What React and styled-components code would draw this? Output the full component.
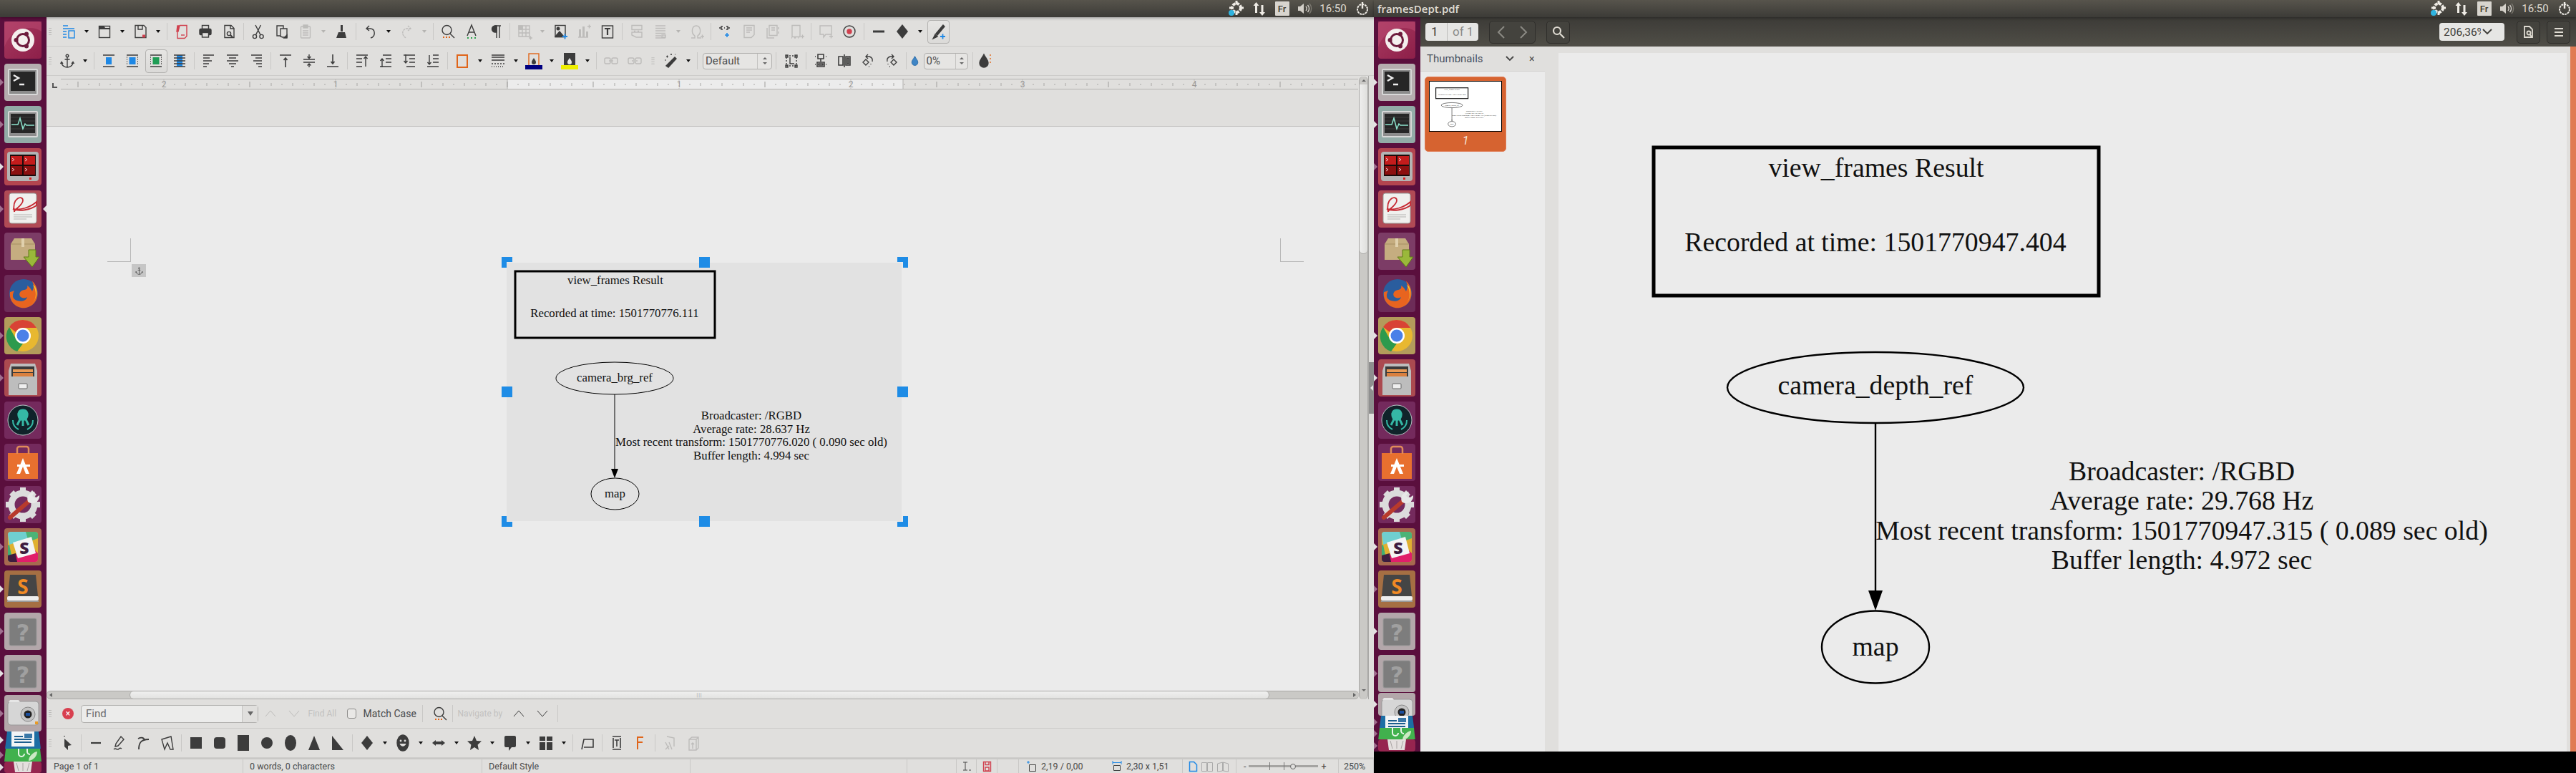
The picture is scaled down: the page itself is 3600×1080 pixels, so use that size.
import React from "react";
import styled, { createGlobalStyle } from "styled-components";

const GlobalStyle = createGlobalStyle`
  html, body {
    margin: 0;
    width: 3600px;
    height: 1080px;
    overflow: hidden;
    background: #000;
    font-family: Roboto, "Noto Sans", sans-serif;
  }
  * { box-sizing: border-box; }
`;

const Desktop = styled.div`
  display: flex;
  width: 3600px;
  height: 1080px;
`;

const Screen = styled.div`
  width: ${(p) => p.$w}px;
  height: 1080px;
  display: flex;
  flex-direction: column;
  background: #000;
`;

const TopBar = styled.div`
  height: 24px;
  flex: none;
  display: flex;
  align-items: center;
  justify-content: space-between;
  padding-left: 5px;
  background: linear-gradient(#57544c, #3c3b37);
  position: relative;
  z-index: 2;
  box-shadow: 0 1px 4px rgba(0, 0, 0, 0.35);
`;

const TitleText = styled.span`
  font-family: "Open Sans", sans-serif;
  font-size: 15px;
  font-weight: 600;
  color: #dfdbd2;
`;

const Indicators = styled.div`
  display: flex;
  align-items: center;
  margin-left: auto;
`;

const Slot = styled.div`
  width: ${(p) => p.$w}px;
  display: flex;
  align-items: center;
  justify-content: center;
  color: #dfdbd2;
  font-size: 15px;
`;

const LangBox = styled.div`
  width: 20px;
  height: 20px;
  border-radius: 1px;
  background: #d8d5cf;
  color: #3c3b37;
  font-size: 13px;
  font-weight: 500;
  display: flex;
  align-items: center;
  justify-content: center;
`;

const Body = styled.div`
  display: flex;
  height: ${(p) => p.$h}px;
  flex: none;
`;

const Launcher = styled.div`
  width: 65px;
  flex: none;
  height: 100%;
  overflow: hidden;
  display: flex;
  flex-direction: column;
  padding: 6px 0 0 6px;
  background: #5a0f3d;
`;

const Tile = styled.div`
  width: 52px;
  height: ${(p) => p.$h || 52}px;
  flex: none;
  margin-bottom: ${(p) => (p.$mb === undefined ? 7 : p.$mb)}px;
  border-radius: 4px;
  background: ${(p) => p.$bg};
  position: relative;
  svg {
    display: block;
    position: relative;
  }
`;

const Pip = styled.span`
  position: absolute;
  left: -6px;
  top: ${(p) => Math.min(p.$h / 2, 26) - 5}px;
  width: 0;
  height: 0;
  border-top: 5px solid transparent;
  border-bottom: 5px solid transparent;
  border-left: 5px solid ${(p) => (p.$open ? "#a0708f" : "#e4e0e2")};
`;

const ActiveArrow = styled.span`
  position: absolute;
  right: -7px;
  top: 21px;
  width: 0;
  height: 0;
  border-top: 5px solid transparent;
  border-bottom: 5px solid transparent;
  border-right: 5px solid #e4e0e2;
`;

/* ---------- writer window ---------- */

const Window = styled.div`
  width: 1855px;
  display: flex;
  flex-direction: column;
  background: #e0dfdd;
`;

const ToolRowBox = styled.div`
  height: ${(p) => p.$h || 41}px;
  flex: none;
  display: flex;
  align-items: center;
  border-bottom: 1px solid #cdccca;
`;

const GripBox = styled.div`
  width: ${(p) => p.$w}px;
  flex: none;
  padding-left: 3px;
  display: flex;
  flex-direction: column;
  gap: 2px;
  span {
    width: 4px;
    height: 1px;
    background: #bdbcba;
  }
`;

const ToolSlot = styled.div`
  width: ${(p) => p.$w || 33}px;
  height: 33px;
  flex: none;
  margin-left: ${(p) => p.$ml || 0}px;
  display: flex;
  align-items: center;
  justify-content: center;
  border-radius: 4px;
  color: ${(p) => (p.$off ? "#bdbcba" : "#3c3c3c")};
  ${(p) =>
    p.$active &&
    `border: 1px solid #b3b2b0; background: linear-gradient(#e6e5e3, #dbdad8); width: 31px; margin: 0 1px;`}
`;

const DropArrow = styled.div`
  width: 17px;
  flex: none;
  display: flex;
  justify-content: center;
  &::after {
    content: "";
    border-left: 3.5px solid transparent;
    border-right: 3.5px solid transparent;
    border-top: 4px solid ${(p) => (p.$off ? "#b5b4b2" : "#111")};
  }
`;

const Sep = styled.div`
  width: 1px;
  height: 24px;
  flex: none;
  margin: 0 ${(p) => (p.$m === undefined ? 3.5 : p.$m)}px;
  background: #c9c8c6;
`;

const SpinBox = styled.div`
  width: ${(p) => p.$w}px;
  height: 23px;
  flex: none;
  margin: 0 ${(p) => p.$mr}px 0 3.5px;
  display: flex;
  align-items: center;
  border: 1px solid #b1b0ae;
  border-radius: 4px;
  background: #e6e5e3;
  color: #4d4d4d;
  font-size: 15px;
  padding-left: 3px;
`;

const SpinText = styled.span`
  flex: 1;
  white-space: nowrap;
`;

const SpinArrows = styled.div`
  width: ${(p) => p.$w}px;
  height: 100%;
  flex: none;
  border-left: 1px solid #c4c3c1;
  display: flex;
  flex-direction: column;
  align-items: center;
  justify-content: center;
  gap: 4px;
`;

const Tri = styled.span`
  width: 0;
  height: 0;
  border-left: 3px solid transparent;
  border-right: 3px solid transparent;
  ${(p) => (p.$down ? "border-top" : "border-bottom")}: 3.5px solid #666;
`;

const Editor = styled.div`
  display: flex;
  height: 871px;
  flex: none;
`;

const EditorMain = styled.div`
  width: 1834px;
  display: flex;
  flex-direction: column;
`;

const RulerArea = styled.div`
  height: 71px;
  flex: none;
  padding: 4px 0 0 8px;
  display: flex;
  align-items: flex-start;
  border-bottom: 1px solid #c2c1bf;
`;

const RulerCorner = styled.div`
  width: 7px;
  height: 7px;
  margin: 6px 5px 0 0;
  flex: none;
  border-left: 2px solid #555;
  border-bottom: 2px solid #555;
`;

const DocArea = styled.div`
  height: 788px;
  flex: none;
  background: #ebebeb;
  padding: 190px 0 0 643px;
  position: relative;
`;

const CropMark = styled.div`
  position: absolute;
  top: 156px;
  left: ${(p) => p.$x}px;
  width: 33px;
  height: 33px;
  ${(p) =>
    p.$right
      ? "border-left: 1px solid #b8b8b8; background: linear-gradient(#b8b8b8, #b8b8b8) 0 32px / 33px 1px no-repeat;"
      : "border-right: 1px solid #b8b8b8; background: linear-gradient(#b8b8b8, #b8b8b8) 0 32px / 33px 1px no-repeat;"}
`;

const AnchorBadge = styled.div`
  position: absolute;
  left: 119px;
  top: 192px;
  width: 20px;
  height: 18px;
  background: #c6c6c6;
  color: #444;
  display: flex;
  align-items: center;
  justify-content: center;
`;

const Selection = styled.div`
  width: 552px;
  height: 361px;
  position: relative;
  background: #e2e2e2;
  svg {
    display: block;
  }
`;

const Handle = styled.span`
  position: absolute;
  left: ${(p) => p.$x}px;
  top: ${(p) => p.$y}px;
  width: 15px;
  height: 15px;
  background: #1e8ce6;
`;

const CornerHandle = styled.span`
  position: absolute;
  left: ${(p) => p.$x}px;
  top: ${(p) => p.$y}px;
  width: 15px;
  height: 15px;
  ${(p) => (p.$bottom ? "border-bottom" : "border-top")}: 7px solid #1e8ce6;
  ${(p) => (p.$right ? "border-right" : "border-left")}: 7px solid #1e8ce6;
`;

const HScroll = styled.div`
  height: 12px;
  flex: none;
  display: flex;
  align-items: stretch;
  background: #cac9c6;
  border-top: 1px solid #a9a8a6;
  border-bottom: 1px solid #a9a8a6;
  border-radius: 6px;
`;

const HEnd = styled.div`
  width: ${(p) => p.$w}px;
  flex: none;
  display: flex;
  align-items: center;
  justify-content: ${(p) => (p.$right ? "flex-end" : "flex-start")};
  padding: 0 4px;
  &::after {
    content: "";
    border-top: 3px solid transparent;
    border-bottom: 3px solid transparent;
    ${(p) => (p.$right ? "border-left" : "border-right")}: 4px solid #666;
  }
`;

const HThumb = styled.div`
  flex: 1;
  border-radius: 6px;
  border: 1px solid #a9a8a6;
  border-top: 0;
  border-bottom: 0;
  background: linear-gradient(#f0f0ef, #e2e2e0);
  display: flex;
  align-items: center;
  justify-content: center;
  color: #a0a0a0;
  font-size: 7px;
  letter-spacing: 1px;
`;

const VScroll = styled.div`
  width: 13px;
  flex: none;
  display: flex;
  flex-direction: column;
  margin-top: 1px;
  background: #cac9c6;
  border-left: 1px solid #a9a8a6;
  border-right: 1px solid #a9a8a6;
  border-radius: 6px 6px;
`;

const VEnd = styled.div`
  height: ${(p) => p.$h}px;
  flex: none;
  display: flex;
  align-items: center;
  justify-content: center;
`;

const VThumb = styled.div`
  height: 237px;
  flex: none;
  background: linear-gradient(90deg, #eeeeed, #dfdfdd);
  border: 1px solid #a9a8a6;
  border-top: 0;
  border-left: 0;
  border-right: 0;
  border-radius: 0 0 6px 6px;
`;

const VTrack = styled.div`
  flex: 1;
`;

const Sash = styled.div`
  width: 8px;
  flex: none;
  border-left: 1px solid #a9a8a6;
  padding-top: 400px;
`;

const SashHandle = styled.div`
  width: 7px;
  height: 72px;
  background: #8f8f8f;
  display: flex;
  align-items: center;
  justify-content: center;
  &::after {
    content: "";
    border-top: 4px solid transparent;
    border-bottom: 4px solid transparent;
    border-right: 4px solid #e8e8e8;
  }
`;

const FindClose = styled.div`
  width: 16px;
  height: 16px;
  flex: none;
  margin-left: 7px;
  border-radius: 50%;
  background: #d8404f;
  color: #fff;
  font-size: 12px;
  line-height: 16px;
  text-align: center;
`;

const FindCombo = styled.div`
  width: 248px;
  height: 25px;
  flex: none;
  margin-left: 10px;
  display: flex;
  align-items: center;
  border: 1px solid #b1b0ae;
  border-radius: 4px;
  background: #ececeb;
  color: #6d6d6d;
  font-size: 15px;
  padding-left: 6px;
`;

const ComboArrow = styled.div`
  width: 22px;
  height: 100%;
  flex: none;
  margin-left: auto;
  background: #e0dfdd;
  border-left: 1px solid #c4c3c1;
  display: flex;
  align-items: center;
  justify-content: center;
  &::after {
    content: "";
    border-left: 4px solid transparent;
    border-right: 4px solid transparent;
    border-top: 6px solid #666;
  }
`;

const BarLabel = styled.span`
  width: ${(p) => p.$w}px;
  flex: none;
  margin-left: ${(p) => p.$ml || 0}px;
  font-size: ${(p) => (p.$off ? 12 : 14)}px;
  white-space: nowrap;
  color: ${(p) => (p.$off ? "#c2c1bf" : "#4a4a4a")};
`;

const CheckBox = styled.span`
  width: 13px;
  height: 14px;
  flex: none;
  margin-left: 15px;
  border: 1px solid #8d8c8a;
  border-radius: 3px;
  background: #e9e8e6;
`;

const StatusBar = styled.div`
  height: 21px;
  flex: none;
  display: flex;
  align-items: center;
  border-top: 2px solid #c9c8c6;
  font-size: 12.5px;
  color: #4a4a4a;
`;

const StatusCell = styled.div`
  width: ${(p) => p.$w}px;
  height: 100%;
  flex: none;
  display: flex;
  align-items: center;
  gap: 4px;
  padding-left: ${(p) => (p.$pad === undefined ? 9 : p.$pad)}px;
  border-right: 1px solid #c9c8c6;
  white-space: nowrap;
`;

const StatusValue = styled.span`
  width: ${(p) => p.$w}px;
  flex: none;
`;

const ZoomTrack = styled.div`
  width: 97px;
  height: 3px;
  flex: none;
  background: #a5a4a2;
  position: relative;
`;

const ZoomMark = styled.span`
  position: absolute;
  left: ${(p) => p.$x}px;
  top: -4px;
  width: ${(p) => (p.$knob ? 8 : 1)}px;
  height: ${(p) => (p.$knob ? 8 : 11)}px;
  margin-top: ${(p) => (p.$knob ? 1.5 : 0)}px;
  background: ${(p) => (p.$knob ? "#e0dfdd" : "#777")};
  border: ${(p) => (p.$knob ? "1px solid #666" : "0")};
  border-radius: ${(p) => (p.$knob ? "50%" : "0")};
`;

/* ---------- pdf viewer window ---------- */

const Viewer = styled.div`
  width: 1615px;
  display: flex;
  flex-direction: column;
  background: #e0dfdd;
`;

const HeaderBar = styled.div`
  height: 41px;
  flex: none;
  display: flex;
  align-items: center;
  padding: 0 8px 0 7px;
  background: linear-gradient(#3c3b37, #504e47);
`;

const Pager = styled.div`
  width: 74px;
  height: 25px;
  flex: none;
  display: flex;
  align-items: center;
  border-radius: 4px;
  background: #e6e6e4;
  font-size: 17px;
  color: #3c3b37;
`;

const PagerCell = styled.span`
  width: ${(p) => p.$w}px;
  height: 100%;
  line-height: 25px;
  flex: none;
  padding-left: ${(p) => p.$pad}px;
  color: ${(p) => (p.$dim ? "#8b8b89" : "#3c3b37")};
  border-left: ${(p) => (p.$dim ? "1px solid #bcbcba" : "0")};
`;

const HeaderBtn = styled.div`
  width: ${(p) => p.$w}px;
  height: 32px;
  flex: none;
  margin-left: ${(p) => p.$ml || 0}px;
  display: flex;
  align-items: center;
  justify-content: space-around;
  border: 1px solid #2f2e2b;
  border-radius: 5px;
  background: #44433e;
  color: #dfdbd2;
`;

const ZoomBox = styled.div`
  width: 91px;
  height: 25px;
  flex: none;
  margin-left: auto;
  display: flex;
  align-items: center;
  border-radius: 4px;
  background: #e6e6e4;
  color: #3c3b37;
  font-size: 15.5px;
  padding-left: 6px;
`;

const ZoomValue = styled.span`
  width: 52px;
  overflow: hidden;
  white-space: nowrap;
  flex: none;
`;

const ViewerBody = styled.div`
  flex: 1;
  display: flex;
  min-height: 0;
`;

const Sidebar = styled.div`
  width: 174px;
  flex: none;
  display: flex;
  flex-direction: column;
`;

const SidebarHead = styled.div`
  height: 35px;
  flex: none;
  display: flex;
  align-items: center;
  padding-left: 9px;
  border-bottom: 1px solid #d2d1cf;
  color: #4a5260;
  font-size: 15px;
`;

const SidebarTitle = styled.span`
  width: 109px;
  flex: none;
`;

const SidebarClose = styled.span`
  margin-left: 20px;
  font-size: 14px;
  color: #555;
`;

const ThumbPanel = styled.div`
  flex: 1;
  background: #ebebeb;
  padding: 7px 0 0 6px;
`;

const ThumbCard = styled.div`
  width: 114px;
  height: 105px;
  padding: 5px;
  border-radius: 5px;
  background: #d66330;
  border: 1px solid #e07b54;
  svg {
    display: block;
    background: #fff;
    outline: 1.5px solid #000;
    outline-offset: -1px;
  }
`;

const ThumbLabel = styled.div`
  margin-top: 3px;
  text-align: center;
  font-size: 16px;
  font-style: italic;
  color: #f4e4dc;
`;

const PageArea = styled.div`
  flex: 1;
  display: flex;
  padding: 9px 0 0 19px;
`;

const Page = styled.div`
  width: 1409px;
  height: 976px;
  flex: none;
  background: #ebebeb;
  svg {
    display: block;
  }
`;

const ScrollStrip = styled.div`
  width: 8px;
  flex: none;
  margin-left: 5px;
  margin-top: -9px;
  background: #e07b54;
`;

/* ---------- drawings ---------- */

const B = "#1e88e5";
const O = "#e0651a";
const R = "#d0404e";

const stack = (color, inner) => (
  <>
    <path d="M4 4h16M4 20h16" stroke={color} />
    {inner}
  </>
);

const dots = "M4 7h1M4 10h1M4 13h1M4 16h1M19 7h1M19 10h1M19 13h1M19 16h1";

const shape = (el) => <g fill="currentColor" stroke="none">{el}</g>;

const ICONS = {
  styles: (
    <g stroke={B}>
      <path d="M4 4h7M4 8h16M4 12h5M4 16h5M4 20h5" />
      <rect x="12" y="11" width="8" height="10" />
    </g>
  ),
  open: (
    <>
      <rect x="4.5" y="4.5" width="15" height="16" />
      <path d="M4 4h7l2 3h7v2H4z" fill="currentColor" stroke="none" />
    </>
  ),
  save: (
    <>
      <path d="M5 3.5h12l3 3v14H5z" />
      <path d="M9 4v5h6V4" />
      <rect x="15" y="16.5" width="4" height="4" fill={R} stroke="none" />
    </>
  ),
  pdf: (
    <g stroke={R}>
      <path d="M9 3.5h10v15l-3 3H6v-9" />
      <path d="M6 4h3l-2 8H5z" fill={R} />
      <path d="M11 17h5" />
    </g>
  ),
  print: (
    <>
      <rect x="7.5" y="3.5" width="9" height="5" />
      <rect x="4" y="8.5" width="16" height="8" rx="1.5" fill="currentColor" />
      <rect x="7.5" y="13.5" width="9" height="6.5" fill="#e0dfdd" />
    </>
  ),
  preview: (
    <>
      <path d="M6 3.5h9l4 4v13H6z" />
      <path d="M14 4v4h5" />
      <circle cx="12" cy="15" r="2.6" />
      <path d="M14 17l3 3" strokeWidth="2" />
    </>
  ),
  cut: (
    <>
      <circle cx="7" cy="19" r="2.6" />
      <circle cx="16.5" cy="19" r="2.6" />
      <path d="M8.5 16.6L15.5 3M15 16.6L8 3" />
    </>
  ),
  copy: (
    <>
      <path d="M5 4h9v14H5z" />
      <path d="M10 8h9v12h-6l-3-1z" fill="#e0dfdd" />
      <path d="M15 21l4-4v4z" fill="currentColor" />
    </>
  ),
  paste: (
    <>
      <rect x="5.5" y="5" width="13" height="16" rx="1" />
      <rect x="9" y="3" width="6" height="4" fill="currentColor" />
      <path d="M8 11h8M8 14h8M8 17h8" />
    </>
  ),
  brush: (
    <>
      <rect x="11" y="3" width="3" height="9" fill="currentColor" stroke="none" />
      <path d="M8 13h9l2 8H5z" fill="currentColor" stroke="none" />
    </>
  ),
  undo: <path d="M10 4L6 8l4 3M6 8h6c7 1 7 11 0 13" />,
  redo: <path d="M14 4l4 4-4 3M18 8h-6c-7 1-7 11 0 13" strokeDasharray="3 1" />,
  find: (
    <>
      <circle cx="10.5" cy="10" r="6.5" />
      <path d="M15 15l6 6" />
      <path d="M5 20h2M9 20h2M13 20h2" stroke={O} strokeWidth="1.8" />
    </>
  ),
  fontA: (
    <>
      <path d="M6 18L12 3l6 15M8 13h8" />
      <path d="M6 21h2M11 21h2M16 21h2" stroke="#2da44e" strokeWidth="2" />
    </>
  ),
  para: (
    <>
      <path d="M11 4h9M14 4v17M18 4v17" />
      <path d="M14 4h-2a4 4 0 0 0 0 9h2z" fill="currentColor" />
    </>
  ),
  table: (
    <>
      <path d="M4 4h15v15H4zM4 9h15M4 14h15M9 4v15M14 4v15" />
      <rect x="4" y="4" width="5" height="5" fill="currentColor" />
      <path d="M18 21h5M20.5 18.5v5" />
    </>
  ),
  image: (
    <>
      <rect x="5" y="3.5" width="14" height="16" />
      <circle cx="9" cy="8" r="1.8" fill="currentColor" />
      <path d="M5 19l6-7 5 6v1.5H5z" fill="currentColor" />
      <path d="M15 19h7M18.5 15.5v7" stroke={B} strokeWidth="1.8" />
    </>
  ),
  chart: (
    <>
      <path d="M4 20h14" />
      <rect x="5" y="9" width="3" height="11" fill="currentColor" stroke="none" />
      <rect x="10" y="5" width="3" height="15" fill="currentColor" stroke="none" />
      <rect x="15" y="12" width="3" height="8" fill="currentColor" stroke="none" />
      <path d="M17 5h5M19.5 2.5v5" />
    </>
  ),
  textbox: (
    <>
      <rect x="4.5" y="4" width="15" height="17" />
      <path d="M8 8h8M12 8v9" strokeWidth="2.2" />
    </>
  ),
  header: <path d="M5 3.5h14v6H5zM5 13h14v7H11l-6-3zM8 11.5h2M13 11.5h2" />,
  list: <path d="M5 4h14M5 7.5h14M5 11h14M5 14.5h14M5 18h8M5 21h14M14 17h5v3h-5z" />,
  omega: (
    <>
      <path d="M5 21h5v-3c-6-4-4-14 2-14s8 10 2 14v3h5" />
      <path d="M18 19h5M20.5 16.5v5" />
    </>
  ),
  link: (
    <>
      <path d="M3 7h3M8 5H6v4h2M13 5h2v4h-2M15 7h3M10 7h1" />
      <path d="M11 17h6M14 14v6" stroke={B} strokeWidth="1.6" />
    </>
  ),
  note: <path d="M5 3.5h14v13l-4 4H5zM8 7h8M8 10h8M8 13h5" />,
  note2: <path d="M7 3.5h11v14H7zM4 7v14h10M10 7h5M10 10h5M20 6v3M20 12v3" />,
  field: <path d="M6 3.5h11v16H6zM5 21h1M9 21h2M14 21h1M18 19h5M20.5 16.5v5" />,
  comment: <path d="M4 4h16v12h-8l-3 4v-4H4zM17 19h5M19.5 16.5v5" />,
  record: (
    <>
      <circle cx="12" cy="12" r="8" />
      <circle cx="12" cy="12" r="3" fill={R} stroke={R} />
    </>
  ),
  line: <path d="M4 12h16" strokeWidth="3" />,
  diamond: shape(<path d="M12 2l8 10-8 10-8-10z" />),
  draw: (
    <>
      <path d="M19 3L9 15l2 2L21 5z" fill="currentColor" />
      <path d="M8 16l-3 6 6-3z" fill="currentColor" />
      <path d="M15 19h7M18.5 15.5v7" stroke={B} strokeWidth="1.8" />
    </>
  ),
  anchor: (
    <>
      <circle cx="12" cy="5" r="1.8" />
      <path d="M12 7v14M8.5 10h7M4 14c0 5 5 7 8 7s8-2 8-7M2.5 16L4 13.5 6 16M18 16l2-2.5 1.5 2.5" />
    </>
  ),
  wrapNone: stack("currentColor", <rect x="8" y="7" width="8" height="10" fill={B} stroke="none" />),
  wrapPara: stack(
    "currentColor",
    <>
      <path d={dots} />
      <rect x="7.5" y="7" width="9" height="10" fill={B} stroke="none" />
    </>
  ),
  wrapPage: stack(
    "currentColor",
    <>
      <path d={dots} />
      <rect x="7.5" y="7" width="9" height="10" fill="#1f9d55" stroke="none" />
    </>
  ),
  wrapThrough: (
    <>
      <rect x="8" y="4" width="8" height="16" fill={B} stroke="none" />
      <path d="M4 4h16M4 8h16M4 12h16M4 16h16M4 20h16" />
    </>
  ),
  alignLeft: <path d="M4 4h15M4 8h9M4 12h12M4 16h8M4 20h5" />,
  alignCenter: <path d="M4 4h16M7 8h10M4 12h16M7 16h10M10 20h4" />,
  alignRight: <path d="M5 4h15M11 8h9M8 12h12M12 16h8M15 20h5" />,
  vTop: <path d="M4 4h16M12 8v13M9.5 11L12 8l2.5 3" strokeWidth="1.6" />,
  vMid: <path d="M4 10h16M4 14h16M12 3v5M12 16v5M9.5 6l2.5 2.5L14.5 6M9.5 18.5L12 16l2.5 2.5" />,
  vBottom: <path d="M4 20h16M12 3v13M9.5 13l2.5 3 2.5-3" strokeWidth="1.6" />,
  indent1: <path d="M4 4h16M4 9h8M4 14h8M4 20h8M17 20V6M14.5 9L17 6l2.5 3" />,
  indent2: <path d="M8 4h12M12 9h8M12 14h8M4 20h16M7 21V9M4.5 12L7 9l2.5 3" />,
  indent3: <path d="M4 4h16M12 9h8M12 14h8M8 20h12M7 3v12M4.5 12L7 15l2.5-3" />,
  indent4: <path d="M12 4h8M12 9h8M12 14h8M4 20h16M7 4v13M4.5 14L7 17l2.5-3" />,
  border: <rect x="5" y="4" width="14" height="17" stroke={O} strokeWidth="2" />,
  lines: <path d="M3 4h18M3 7h18M3 11h18M3 16h2M7 16h2M11 16h2M15 16h2M19 16h2M3 20h1M6 20h1M9 20h1M12 20h1M15 20h1M18 20h1" />,
  lineColor: (
    <>
      <rect x="5" y="2" width="14" height="17" stroke={O} strokeWidth="1.4" />
      <path d="M12 8c-2 3-3 4-3 6a3 3 0 0 0 6 0c0-2-1-3-3-6z" fill="currentColor" stroke="none" />
      <rect x="0" y="18" width="24" height="6" fill="#000080" stroke="none" />
    </>
  ),
  fillColor: (
    <>
      <rect x="4" y="1" width="16" height="18" fill="currentColor" stroke="none" />
      <path d="M12 8c-2 3-3 4-3 6a3 3 0 0 0 6 0c0-2-1-3-3-6z" fill="#e8e8e8" stroke="none" />
      <rect x="0" y="18" width="24" height="6" fill="#eeee00" stroke="none" />
    </>
  ),
  chain1: (
    <>
      <rect x="3" y="8" width="8" height="8" rx="2" />
      <rect x="13" y="8" width="8" height="8" rx="2" />
      <path d="M9 12h6" />
    </>
  ),
  chain2: (
    <>
      <rect x="3" y="8" width="8" height="8" rx="2" />
      <rect x="13" y="8" width="8" height="8" rx="2" />
      <path d="M8 12h2M14 12h2" />
    </>
  ),
  chain3: <path d="M9 6h6M9 10h6M9 14h6M9 18h6" />,
  wand: (
    <>
      <path d="M18 7l2 2L9 21l-3-2z" fill="currentColor" />
      <path d="M6 6h3M7.5 4.5v3M12 3h2M13 2v2M18 3h1M4 11h2" strokeWidth="1.2" />
    </>
  ),
  crop: (
    <>
      <rect x="5" y="5" width="14" height="14" strokeDasharray="2 2" />
      <rect x="4" y="4" width="3" height="3" />
      <rect x="17" y="4" width="3" height="3" />
      <rect x="4" y="18" width="3" height="3" />
      <rect x="17" y="18" width="3" height="3" />
      <path d="M10 7v9h6" />
    </>
  ),
  flipV: <path d="M8 3h8v6H8zM12 9v4M7 14h10v6H7zM9 16h6v2H9zM4 6h1M19 6h1M4 17h1M19 17h1" strokeWidth="1.6" />,
  flipH: <path d="M4 6h6v12H4zM14 6h6v12h-6zM16 8h2v8h-2zM12 3v18" strokeWidth="1.6" />,
  rotL: <path d="M12 3L9 6l3 3M9 6h5c3 1 5 3 4 7M5 14l4-4 4 4-4 4zM16 16v1M13 20h1" />,
  rotR: <path d="M12 3l3 3-3 3M15 6h-5c-3 1-5 3-4 7M11 14l4-4 4 4-4 4zM7 16v1M9 20h1" />,
  drop: <path d="M12 3c-3 6-6 8-6 12a6 6 0 0 0 12 0c0-4-3-6-6-12z" fill="#3f85c5" stroke="#2e6da8" />,
  dropDark: (
    <>
      <path d="M11 3c-3 6-6 8-6 12a6 6 0 0 0 12 0c0-4-3-6-6-12z" fill="currentColor" />
      <path d="M20 3v2M20 8v2M20 13v2" stroke={O} />
    </>
  ),
  pointer: shape(<path d="M8 3l2 0 0-1-2 0zM9 6l10 9-5 1 0 6-5-5z" />),
  dash: <path d="M5 12h14" strokeWidth="2.2" />,
  scribble: <path d="M14 3l4 4-8 9-4 1 1-4zM4 21c3-3 4 1 6 0s2-3 5-1" />,
  curve: <path d="M6 21c0-8 2-14 14-14M5 6c4-2 8-2 9 2" strokeWidth="1.8" />,
  polygon: <path d="M5 7l13-4 3 18-4 0-4-9-4 9z" />,
  rect: shape(<rect x="4" y="4" width="16" height="16" />),
  rrect: shape(<rect x="4" y="4" width="16" height="16" rx="4" />),
  tall: shape(<rect x="4" y="1" width="16" height="22" />),
  circle: shape(<circle cx="12" cy="12" r="8" />),
  ellipse: shape(<ellipse cx="12" cy="12" rx="8" ry="11" />),
  tri: shape(<path d="M12 2l8 20H4z" />),
  rtri: shape(<path d="M4 2l16 20H4z" />),
  smile: (
    <>
      <ellipse cx="12" cy="12" rx="8" ry="11" fill="currentColor" />
      <circle cx="9" cy="9" r="1.4" fill="#e0dfdd" stroke="none" />
      <circle cx="15" cy="9" r="1.4" fill="#e0dfdd" stroke="none" />
      <path d="M7.5 13c2 5 7 5 9 0z" fill="#e0dfdd" stroke="none" />
    </>
  ),
  arrows: shape(<path d="M3 12l5-4v2h8V8l5 4-5 4v-2H8v2z" />),
  star: shape(<path d="M12 2l3 7 7 .6-5.400 4.800L18 22l-6-4-6 4 1.400-7.600L2 9.600 9 9z" />),
  bubble: shape(<path d="M6 2h12a2 2 0 0 1 2 2v12a2 2 0 0 1-2 2h-4l-4 5v-5H6a2 2 0 0 1-2-2V4a2 2 0 0 1 2-2z" />),
  flow: shape(<path d="M3 3h8v6H3zM13 3h8v6h-8zM3 11h8v11H3zM13 11h8v11h-8z" />),
  points: <path d="M4 21L7 7h13v11H7" strokeWidth="1.6" />,
  textT: <path d="M6 3h12M6 21h12M7 5v14M17 5v14M9 8h6M12 8v9" strokeWidth="1.6" />,
  fontwork: <path d="M8 21V4h8M8 11h7" stroke={O} strokeWidth="2" />,
  toFront: <path d="M8 3l10 2v12M6 21l5-5M6 11l5 10M15 21l-4-10" />,
  extrude: (
    <>
      <path d="M6 7l4-3h9v15l-3 3H6zM6 7h10v15M16 7l3-3" />
      <path d="M11 20v-8M9 14l2-2 2 2" />
    </>
  ),
};

const Icon = ({ name, size = 24 }) => (
  <svg width={size} height={size} viewBox="0 0 24 24" fill="none" stroke="currentColor" strokeWidth="1.4">
    {ICONS[name]}
  </svg>
);

const Grip = ({ w }) => (
  <GripBox $w={w}>
    <span />
    <span />
    <span />
    <span />
  </GripBox>
);

// "|" separator, ">" dropdown arrow, "~" disabled, "*" pressed, ":n" slot width
const ToolItems = ({ items }) =>
  items.map((raw, i) => {
    if (raw === "|") return <Sep key={i} />;
    if (raw === ">") return <DropArrow key={i} />;
    if (raw === ">~") return <DropArrow key={i} $off />;
    const [head, w] = raw.split(":");
    const off = head.endsWith("~");
    const active = head.endsWith("*");
    const name = head.replace(/[~*]/, "");
    return (
      <ToolSlot key={i} $off={off} $active={active} $w={w ? Number(w) : undefined}>
        <Icon name={name} />
      </ToolSlot>
    );
  });

const Caret = ({ up }) => (
  <svg width="18" height="10" viewBox="0 0 18 10" fill="none" stroke="currentColor">
    <path d={up ? "M2 9l7-8 7 8" : "M2 1l7 8 7-8"} />
  </svg>
);

const ROW_ONE = "styles > open > save > | pdf print preview | cut copy paste~ >~ brush | undo > redo~ >~ | find fontA para | table~ >~ image chart~ textbox | header~ list~ >~ omega~ | link note~ note2~ field~ | comment~ record | line diamond > draw*".split(" ");
const ROW_TWO_A = "anchor > | wrapNone wrapPara wrapPage* wrapThrough | alignLeft alignCenter alignRight | vTop vMid vBottom | indent1 indent2 indent3 indent4 | border > lines > lineColor > fillColor > | chain1~ chain2~ chain3~:17 wand >".split(" ");
const ROW_TWO_B = "| flipV flipH rotL rotR |".split(" ");
const DRAW_ROW = "pointer | dash scribble curve polygon | rect rrect tall circle ellipse tri rtri | diamond > smile > arrows > star > bubble > flow > | points | textT fontwork | toFront~ extrude~".split(" ");

const Ruler = () => {
  const ticks = [];
  for (let i = -41; i <= 79; i++) {
    const x = 709 + i * 15;
    const major = i % 16 === 0;
    if (major && i !== 0) {
      ticks.push(
        <g key={i}>
          <path d={`M${x} 1v14`} stroke="#c0bfbd" strokeDasharray="2 2" />
          <text x={x} y="12" textAnchor="middle" fontSize="12" fill="#9a9896" fontFamily="Roboto, sans-serif">
            {Math.abs(i / 16)}
          </text>
        </g>
      );
    } else if (i % 8 === 0) {
      ticks.push(<path key={i} d={`M${x} 4v8`} stroke="#9e9d9b" />);
    } else if (i % 2 === 0) {
      ticks.push(<path key={i} d={`M${x} 6v4`} stroke="#a9a8a6" />);
    } else {
      ticks.push(<path key={i} d={`M${x} 7v2`} stroke="#a9a8a6" />);
    }
  }
  return (
    <svg width="1813" height="16" viewBox="85 0 1813 16" display="block">
      <rect x="709" y="0" width="553" height="15" fill="#ececec" />
      <path d="M85 .5H1898M85 14.500H1898" stroke="#b3b2b0" />
      <path d="M709 0v15M1262 0v15" stroke="#b3b2b0" />
      {ticks}
    </svg>
  );
};

const LEFT_GRAPH = {
  size: 16.8,
  sw: 1,
  boxW: 3,
  title: "view_frames Result",
  recorded: "Recorded at time: 1501770776.111",
  node: "camera_brg_ref",
  box: [720, 379, 279, 93],
  titleAt: [860, 397],
  recordedAt: [859, 443],
  top: [859, 528.500, 82, 22.500],
  nodeY: 533,
  arrow: [551, 655, 668, 5],
  map: [859.500, 690, 33.500, 22],
  mapY: 695,
  labelX: 1050,
  labelY: [586, 605, 623, 642],
  labels: ["Broadcaster: /RGBD", "Average rate: 28.637 Hz", "Most recent transform: 1501770776.020 ( 0.090 sec old)", "Buffer length: 4.994 sec"],
};

const RIGHT_GRAPH = {
  size: 37.8,
  sw: 2.4,
  boxW: 5,
  title: "view_frames Result",
  recorded: "Recorded at time: 1501770947.404",
  node: "camera_depth_ref",
  box: [2311, 206, 622, 207],
  titleAt: [2622, 247],
  recordedAt: [2621, 351],
  top: [2621, 541.500, 207, 49.500],
  nodeY: 551,
  arrow: [591, 825, 853, 10],
  map: [2621, 904, 75, 50.500],
  mapY: 916,
  labelX: 3049,
  labelY: [671, 712, 754, 795],
  labels: ["Broadcaster: /RGBD", "Average rate: 29.768 Hz", "Most recent transform: 1501770947.315 ( 0.089 sec old)", "Buffer length: 4.972 sec"],
};

const Graph = ({ g, viewBox, width, height, boost = 1 }) => {
  const [ax0, ax1, ax2, ah] = g.arrow;
  const cx = g.top[0];
  return (
    <svg width={width} height={height} viewBox={viewBox} fontFamily='"Liberation Serif", serif' fontSize={g.size} textAnchor="middle" fill="#111">
      <rect x={g.box[0]} y={g.box[1]} width={g.box[2]} height={g.box[3]} fill="none" stroke="#000" strokeWidth={g.boxW * boost} />
      <text x={g.titleAt[0]} y={g.titleAt[1]}>{g.title}</text>
      <text x={g.recordedAt[0]} y={g.recordedAt[1]}>{g.recorded}</text>
      <ellipse cx={cx} cy={g.top[1]} rx={g.top[2]} ry={g.top[3]} fill="none" stroke="#000" strokeWidth={g.sw * boost} />
      <text x={cx} y={g.nodeY}>{g.node}</text>
      <path d={`M${cx} ${ax0}V${ax1}`} stroke="#000" strokeWidth={g.sw * boost} />
      <path d={`M${cx - ah} ${ax1}H${cx + ah}L${cx} ${ax2}z`} fill="#000" />
      <ellipse cx={g.map[0]} cy={g.map[1]} rx={g.map[2]} ry={g.map[3]} fill="none" stroke="#000" strokeWidth={g.sw * boost} />
      <text x={g.map[0]} y={g.mapY}>map</text>
      {g.labels.map((t, i) => (
        <text key={t} x={g.labelX} y={g.labelY[i]}>{t}</text>
      ))}
    </svg>
  );
};

/* launcher art, all on a 52x52 canvas */
const frame = (screen) => (
  <>
    <rect x="5" y="7" width="42" height="37" rx="2" fill="#d8d8d8" />
    <rect x="7" y="9" width="38" height="33" fill="#8c8c8c" />
    <rect x="9" y="11" width="34" height="27" fill="#262626" />
    {screen}
  </>
);

const LAUNCHER_ART = {
  ubuntu: (
    <>
      <path d="M0 36C10 8 38 4 52 14V0H0z" fill="#b8486f" opacity=".6" />
      <circle cx="26" cy="26" r="16" fill="#f4efee" />
      <circle cx="26" cy="26" r="8.500" fill="none" stroke="#6d1a3c" strokeWidth="3" />
      <circle cx="16.500" cy="26" r="3" fill="#6d1a3c" />
      <circle cx="31" cy="17.500" r="3" fill="#6d1a3c" />
      <circle cx="31" cy="34.500" r="3" fill="#6d1a3c" />
    </>
  ),
  terminal: frame(<path d="M13 16l7 4-7 4M21 29h7" fill="none" stroke="#eee" strokeWidth="2.400" />),
  monitor: frame(
    <>
      <path d="M9 16h34M9 21h34M9 32h34" stroke="#3d3d3d" />
      <path d="M10 26h9l3-9 4 15 3-7 2 2h11" fill="none" stroke="#8fe6cf" strokeWidth="1.500" />
    </>
  ),
  redgrid: (
    <>
      <rect x="4" y="5" width="44" height="41" rx="4" fill="#b4b4b4" />
      <rect x="8" y="9" width="36" height="30" fill="#1b0b0b" />
      <rect x="9" y="11" width="16" height="12" fill="#c41c1c" />
      <rect x="27" y="11" width="16" height="12" fill="#c41c1c" />
      <rect x="9" y="25" width="16" height="12" fill="#8c1010" />
      <rect x="27" y="25" width="16" height="12" fill="#8c1010" />
      <path d="M11 14l3 2-3 2M29 14l3 2-3 2M11 28l3 2-3 2M29 28l3 2-3 2" fill="none" stroke="#f0c8c8" />
      <rect x="35" y="41" width="3" height="3" fill="#e02020" />
    </>
  ),
  evince: (
    <>
      <rect x="7" y="4" width="38" height="42" rx="3" fill="#f0f0ee" stroke="#9a9a98" />
      <path d="M14 30C10 10 26 6 26 14c0 7-12 12-12 16M12 26c10 2 24-2 33-10v5c-8 6-24 9-33 5z" fill="none" stroke="#c62b34" strokeWidth="1.800" />
      <path d="M13 34h26M13 37h26M13 40h18" stroke="#b4b4b2" />
    </>
  ),
  package: (
    <>
      <path d="M9 16l5-8h24l5 8v22H9z" fill="#c5ad80" />
      <path d="M9 16h34" stroke="#a68f63" />
      <rect x="24" y="8" width="4" height="12" fill="#e0d0ad" />
      <path d="M34 24h10v10h5L39 48 27 34h7z" fill="#9ab83a" stroke="#5e7a16" />
    </>
  ),
  firefox: (
    <>
      <circle cx="27" cy="26" r="20" fill="#2a5d9e" />
      <path d="M8 24C6 38 18 48 30 46c12-2 20-14 15-28-1-4-4-8-6-9 3 6 2 10 0 14-3-6-7-8-7-8s2 5-4 6c-6 1-8 5-6 9 2 3 8 3 10 1-1 5-8 7-14 5S10 30 14 22C9 24 8 24 8 24z" fill="#e8641f" />
      <path d="M40 14c5 8 6 18-1 26 4-4 9-14 4-24z" fill="#f7c531" />
    </>
  ),
  chrome: (
    <>
      <circle cx="26" cy="26" r="22" fill="#e8b830" />
      <path d="M26 4a22 22 0 0 1 19 11H26a11 11 0 0 0-10 6L7 14A22 22 0 0 1 26 4z" fill="#d84335" />
      <path d="M7 14l9.500 17A11 11 0 0 0 26 37l-8 11A22 22 0 0 1 7 14z" fill="#2d9a4d" />
      <circle cx="26" cy="26" r="11" fill="#fff" />
      <circle cx="26" cy="26" r="8.500" fill="#4a80e8" />
    </>
  ),
  files: (
    <>
      <path d="M9 6h34l3 10v34H6V16z" fill="#bdbdbd" />
      <rect x="10" y="10" width="32" height="14" fill="#3a3a3a" />
      <rect x="12" y="14" width="28" height="4" fill="#e99a55" />
      <rect x="12" y="19" width="28" height="5" fill="#d9803f" />
      <rect x="20" y="34" width="12" height="7" rx="1" fill="#eee" stroke="#666" />
    </>
  ),
  git: (
    <>
      <circle cx="26" cy="26" r="21" fill="#10232a" stroke="#b8c6c6" />
      <path d="M26 12c5 0 7 4 6 8l-2 5 4 8M26 12c-5 0-7 4-6 8l2 5-4 8M26 26v8" fill="none" stroke="#35b8a5" strokeWidth="3" />
      <path d="M12 26a14 14 0 0 0 8 13M40 26a14 14 0 0 1-8 13" fill="none" stroke="#35b8a5" strokeWidth="2" />
      <ellipse cx="26" cy="19" rx="7" ry="8" fill="#35b8a5" />
    </>
  ),
  store: (
    <>
      <path d="M5 13h42v36H5z" fill="#e8702f" />
      <path d="M18 14V7a3 3 0 0 1 3-3h10a3 3 0 0 1 3 3v7" fill="none" stroke="#e08a5a" strokeWidth="2.500" />
      <path d="M26 20l-9 22h5l4-10 4 10h5z" fill="#fff" />
      <rect x="18" y="29" width="18" height="3" fill="#fff" />
    </>
  ),
  settings: (
    <>
      <circle cx="26" cy="26" r="16" fill="none" stroke="#dcdcdc" strokeWidth="9" />
      <path d="M22 2h8v8h-8zM22 42h8v8h-8zM2 22h8v8H2zM42 22h8v8h-8zM7 12l6-6 6 6-6 6zM33 12l6-6 6 6-6 6zM7 40l6 6 6-6-6-6zM33 40l6 6 6-6-6-6z" fill="#dcdcdc" />
      <path d="M8 44l28-24" stroke="#b83a2c" strokeWidth="6" strokeLinecap="round" />
      <path d="M33 22c-3-8 3-14 10-14l-4 6 4 3 6-4c1 8-8 15-16 9z" fill="#e8e8e8" />
    </>
  ),
  slack: (
    <>
      <rect x="5" y="5" width="42" height="42" rx="4" fill="#e0b030" />
      <path d="M5 9a4 4 0 0 1 4-4l21 0 4 9-27 9z" fill="#6fcfd0" />
      <path d="M30 5h13a4 4 0 0 1 4 4v5l-13 5z" fill="#4bb377" />
      <path d="M7 23l5 24H9a4 4 0 0 1-4-4V24z" fill="#3fae72" />
      <path d="M5 38l11-3 3 12H9a4 4 0 0 1-4-4z" fill="#3e1c3f" />
      <path d="M18 47l-2-10 27-6 4 4v8a4 4 0 0 1-4 4z" fill="#e01e6a" />
      <path d="M12 20l26-8 6 23-25 7z" fill="#f4f4f4" />
      <text x="28" y="36" fontFamily="Open Sans, sans-serif" fontSize="23" fontWeight="800" textAnchor="middle" fill="#3e1c3f">S</text>
    </>
  ),
  sublime: (
    <>
      <path d="M8 6h36l3 30H5z" fill="#454545" />
      <rect x="4" y="36" width="44" height="6" rx="2" fill="#eee" />
      <rect x="4" y="42" width="44" height="2" fill="#999" />
      <text x="26" y="33" fontFamily="Open Sans, sans-serif" fontSize="28" fontWeight="700" textAnchor="middle" fill="#f08a24">S</text>
    </>
  ),
  unknown: (
    <>
      <rect x="7" y="8" width="38" height="38" rx="2" fill="#7d7d7d" stroke="#9a9a9a" />
      <text x="26" y="39" fontFamily="DejaVu Sans, sans-serif" fontSize="32" fontWeight="700" textAnchor="middle" fill="#a0a0a0">?</text>
    </>
  ),
  camera: (
    <>
      <rect x="5" y="9" width="43" height="33" rx="4" fill="#d6d6d6" stroke="#999" />
      <path d="M8 7h12l2 3H6z" fill="#e6e6e6" />
      <circle cx="33" cy="27" r="10" fill="#c4c4c4" stroke="#888" />
      <circle cx="33" cy="27" r="5.500" fill="#222" />
      <rect x="30" y="25" width="6" height="4" fill="#1a4fa0" />
      <rect x="43" y="37" width="4" height="4" fill="#e99a25" />
    </>
  ),
  doc: (
    <>
      <path d="M4 0h44l3 24H1z" fill="#1c6ea4" />
      <rect x="10" y="0" width="32" height="21" fill="#f2f4f6" />
      <path d="M14 7h12M14 11h24M14 15h24" stroke="#1c5f8f" strokeWidth="2" />
      <rect x="28" y="3" width="11" height="6" fill="#3a78a8" />
    </>
  ),
  qt: (
    <>
      <path d="M2 0h48l2 18H0z" fill="#41b14d" />
      <path d="M20 0v7a4 4 0 0 0 8 0M32 0v4a4 4 0 0 0 4 4" fill="none" stroke="#e8f6e8" strokeWidth="2" />
      <path d="M34 17c0-6 6-12 12-13 0 6-5 12-12 13z" fill="#cbe9c4" />
    </>
  ),
  trash: (
    <>
      <path d="M13 0h26l-2 15H15z" fill="#e4dfde" />
      <path d="M17 2l3 11M26 2v11M35 2l-3 11" stroke="#a8a3a2" />
    </>
  ),
};

const LAUNCHER_TILES = [
  ["ubuntu", "linear-gradient(135deg,#a93a60,#8d1f49)"],
  ["terminal", "#b5adaf"],
  ["monitor", "#93aba7"],
  ["redgrid", "#b3454f"],
  ["evince", "#b04a55"],
  ["package", "#7c3c66"],
  ["firefox", "#6d2c58"],
  ["chrome", "#b39b5b"],
  ["files", "#ab4a50"],
  ["git", "#742a5d"],
  ["store", "#742a5d"],
  ["settings", "#742a5d"],
  ["slack", "#a7694f"],
  ["sublime", "#a56f43"],
  ["unknown", "#b3a7aa"],
  ["unknown", "#b3a7aa"],
];

const LaunchIcon = ({ art, bg, pip, h, mb, active }) => (
  <Tile $bg={bg} $h={h} $mb={mb}>
    <svg width="52" height={h || 52} viewBox={`0 0 52 ${h || 52}`} overflow="hidden">
      {LAUNCHER_ART[art]}
    </svg>
    {pip && <Pip $open={pip === "o"} $h={h || 52} />}
    {active && <ActiveArrow />}
  </Tile>
);

const Dock = ({ pips, tail, active }) => (
  <Launcher>
    {LAUNCHER_TILES.map(([art, bg], i) => (
      <LaunchIcon key={i} art={art} bg={bg} pip={pips[i]} active={active === i} mb={i === 15 ? tail.gap : undefined} />
    ))}
    <LaunchIcon art="camera" bg="#b3a7aa" pip={pips[16]} h={tail.camera} mb={0} />
    <LaunchIcon art="doc" bg="transparent" pip={pips[17]} h={tail.doc} mb={0} />
    <LaunchIcon art="qt" bg="transparent" pip={pips[18]} h={tail.qt} mb={0} />
    <LaunchIcon art="trash" bg="#96254f" pip={pips[19]} h={tail.trash} mb={0} />
  </Launcher>
);

const TrayIcons = () => (
  <Indicators>
    <Slot $w={33}>
      <svg width="26" height="24" viewBox="0 0 26 24">
        <circle cx="14" cy="11" r="6" fill="none" stroke="#efece6" strokeWidth="4" strokeDasharray="4 1.500" />
        <path d="M14 1v5M14 16v5M4 11h5M19 11h5" stroke="#efece6" strokeWidth="3" />
        <circle cx="7" cy="18" r="4" fill="#2fb4e0" />
      </svg>
    </Slot>
    <Slot $w={33}>
      <svg width="20" height="22" viewBox="0 0 20 22" fill="#efece6">
        <path d="M5.500 2L1.500 7H4v10h3V7h2.500zM12.500 6v10H10l4 5 4-5h-2.500V6z" />
      </svg>
    </Slot>
    <Slot $w={31}>
      <LangBox>Fr</LangBox>
    </Slot>
    <Slot $w={32}>
      <svg width="22" height="20" viewBox="0 0 22 20" fill="none">
        <path d="M2 7h3l5-4v14l-5-4H2z" fill="#d3cfc8" />
        <path d="M13 7c1.500 2 1.500 4 0 6M15.500 5c2.500 3 2.500 7 0 10" stroke="#d3cfc8" strokeWidth="1.400" />
        <path d="M18 3c3.500 4 3.500 10 0 14" stroke="#7d7a72" strokeWidth="1.400" />
      </svg>
    </Slot>
    <Slot $w={48}>16:50</Slot>
    <Slot $w={33}>
      <svg width="20" height="22" viewBox="0 0 20 22" fill="none" stroke="#efece6" strokeWidth="2">
        <circle cx="10" cy="12" r="7" strokeDasharray="3 1" />
        <path d="M10 2v9" strokeWidth="2.400" />
      </svg>
    </Slot>
  </Indicators>
);

const LEFT_PIPS = [null, "o", "o", "f", "o", null, null, "o", "o", null, null, null, "o", "f", "o", "f", "o", "f", "o", "f"];
const RIGHT_PIPS = [null, "f", "f", "o", null, null, null, "f", "f", null, null, null, "f", "o", "f", "o", "f", "o", "o", "o"];

const App = () => (
  <>
    <GlobalStyle />
    <Desktop>
      <Screen $w={1920}>
        <TopBar>
          <TrayIcons />
        </TopBar>
        <Body $h={1056}>
          <Dock pips={LEFT_PIPS} active={4} tail={{ gap: 4, camera: 51, doc: 24, qt: 18, trash: 16 }} />
          <Window>
            <ToolRowBox>
              <Grip w={14.5} />
              <ToolItems items={ROW_ONE} />
            </ToolRowBox>
            <ToolRowBox>
              <Grip w={12.5} />
              <ToolItems items={ROW_TWO_A} />
              <Sep />
              <SpinBox $w={97} $mr={5}>
                <SpinText>Default</SpinText>
                <SpinArrows $w={20}>
                  <Tri />
                  <Tri $down />
                </SpinArrows>
              </SpinBox>
              <Sep $m={0} />
              <ToolSlot $ml={4}>
                <Icon name="crop" />
              </ToolSlot>
              <ToolItems items={ROW_TWO_B} />
              <ToolSlot $w={17}>
                <Icon name="drop" size={18} />
              </ToolSlot>
              <SpinBox $w={62} $mr={6}>
                <SpinText>0%</SpinText>
                <SpinArrows $w={17}>
                  <Tri />
                  <Tri $down />
                </SpinArrows>
              </SpinBox>
              <Sep $m={0} />
              <ToolSlot>
                <Icon name="dropDark" />
              </ToolSlot>
            </ToolRowBox>
            <Editor>
              <EditorMain>
                <RulerArea>
                  <RulerCorner />
                  <Ruler />
                </RulerArea>
                <DocArea>
                  <CropMark $x={85} />
                  <AnchorBadge>
                    <Icon name="anchor" size={13} />
                  </AnchorBadge>
                  <CropMark $x={1724} $right />
                  <Selection>
                    <Graph g={LEFT_GRAPH} viewBox="708 367 552 361" width={552} height={361} />
                    <CornerHandle $x={-7} $y={-8} />
                    <Handle $x={269} $y={-8} />
                    <CornerHandle $x={546} $y={-8} $right />
                    <Handle $x={-7} $y={173} />
                    <Handle $x={546} $y={173} />
                    <CornerHandle $x={-7} $y={354} $bottom />
                    <Handle $x={269} $y={354} />
                    <CornerHandle $x={546} $y={354} $right $bottom />
                  </Selection>
                </DocArea>
                <HScroll>
                  <HEnd $w={116} />
                  <HThumb>|||</HThumb>
                  <HEnd $w={125} $right />
                </HScroll>
              </EditorMain>
              <VScroll>
                <VEnd $h={11}>
                  <Tri />
                </VEnd>
                <VThumb />
                <VTrack />
                <VEnd $h={26}>
                  <Tri $down />
                </VEnd>
              </VScroll>
              <Sash>
                <SashHandle />
              </Sash>
            </Editor>
            <ToolRowBox>
              <Grip w={15} />
              <FindClose>×</FindClose>
              <FindCombo>
                Find
                <ComboArrow />
              </FindCombo>
              <ToolSlot $off>
                <Caret up />
              </ToolSlot>
              <ToolSlot $off>
                <Caret />
              </ToolSlot>
              <BarLabel $w={39} $ml={3.5} $off>Find All</BarLabel>
              <CheckBox />
              <BarLabel $w={75} $ml={10}>Match Case</BarLabel>
              <Sep $m={7} />
              <ToolSlot $w={34}>
                <Icon name="find" />
              </ToolSlot>
              <Sep $m={0} />
              <BarLabel $w={62} $ml={7} $off>Navigate by</BarLabel>
              <ToolSlot $ml={7}>
                <Caret up />
              </ToolSlot>
              <ToolSlot>
                <Caret />
              </ToolSlot>
              <Sep $m={4} />
            </ToolRowBox>
            <ToolRowBox $h={41}>
              <Grip w={11.5} />
              <ToolItems items={DRAW_ROW} />
            </ToolRowBox>
            <StatusBar>
              <StatusCell $w={275} $pad={10}>Page 1 of 1</StatusCell>
              <StatusCell $w={334}>0 words, 0 characters</StatusCell>
              <StatusCell $w={291}>Default Style</StatusCell>
              <StatusCell $w={303} />
              <StatusCell $w={69} />
              <StatusCell $w={28} $pad={7}>
                <svg width="14" height="14" viewBox="0 0 14 14" fill="none" stroke="#444"><path d="M2 1h6M5 1v11M2 12h6M10 12h3" /></svg>
              </StatusCell>
              <StatusCell $w={29} $pad={8}>
                <svg width="13" height="16" viewBox="0 0 13 16" fill="none" stroke={R} strokeWidth="1.400"><path d="M1.500 1.500h10v13h-10zM4 1.500v4h5v-4M4 9h5v5H4z" /></svg>
              </StatusCell>
              <StatusCell $w={30} />
              <StatusCell $w={229} $pad={9}>
                <svg width="18" height="16" viewBox="0 0 18 16" fill="none" stroke="#444"><path d="M5.500 5.500h9v9h-9z" /><path d="M2 2h4M4 0v4" stroke={B} /></svg>
                <StatusValue $w={93}>2,19 / 0,00</StatusValue>
                <svg width="18" height="16" viewBox="0 0 18 16" fill="none" stroke="#444"><path d="M4.500 6.500h9v7h-9z" /><path d="M3 2.500h12M3 0v5M15 0v5" stroke={B} /></svg>
                <StatusValue $w={60}>2,30 x 1,51</StatusValue>
              </StatusCell>
              <StatusCell $w={75} $pad={8}>
                <svg width="13" height="16" viewBox="0 0 13 16" fill="none" stroke={B} strokeWidth="1.500"><path d="M1.500 1.500h6l4 4v9h-10z" /></svg>
                <svg width="18" height="16" viewBox="0 0 18 16" fill="none" stroke="#aaa"><path d="M1.500 2.500h7v12h-7zM9.500 2.500h7v12h-7z" /></svg>
                <svg width="18" height="16" viewBox="0 0 18 16" fill="none" stroke="#aaa"><path d="M1.500 4l7-2v12l-7 1zM16.500 4l-7-2v12l7 1z" /></svg>
              </StatusCell>
              <StatusCell $w={143} $pad={10}>
                <span>-</span>
                <ZoomTrack>
                  <ZoomMark $x={29} />
                  <ZoomMark $x={49} />
                  <ZoomMark $x={58} $knob />
                </ZoomTrack>
                <span>+</span>
              </StatusCell>
              <StatusCell $w={49} $pad={7}>250%</StatusCell>
            </StatusBar>
          </Window>
        </Body>
      </Screen>
      <Screen $w={1680}>
        <TopBar>
          <TitleText>framesDept.pdf</TitleText>
          <TrayIcons />
        </TopBar>
        <Body $h={1026}>
          <Dock pips={RIGHT_PIPS} tail={{ gap: 1, camera: 32, doc: 17, qt: 16, trash: 17 }} />
          <Viewer>
            <HeaderBar>
              <Pager>
                <PagerCell $w={30} $pad={8}>1</PagerCell>
                <PagerCell $w={44} $pad={7} $dim>of 1</PagerCell>
              </Pager>
              <HeaderBtn $w={65} $ml={15}>
                <svg width="14" height="20" viewBox="0 0 14 20" fill="none" stroke="#8b8a84" strokeWidth="2"><path d="M11 2L3 10l8 8" /></svg>
                <svg width="14" height="20" viewBox="0 0 14 20" fill="none" stroke="#8b8a84" strokeWidth="2"><path d="M3 2l8 8-8 8" /></svg>
              </HeaderBtn>
              <HeaderBtn $w={33} $ml={15}>
                <svg width="20" height="20" viewBox="0 0 20 20" fill="none" stroke="#dfdbd2" strokeWidth="2.200"><circle cx="8" cy="8" r="5" /><path d="M12 12l6 6" /></svg>
              </HeaderBtn>
              <ZoomBox>
                <ZoomValue>206,36%</ZoomValue>
                <svg width="18" height="12" viewBox="0 0 18 12" fill="none" stroke="#3c3b37" strokeWidth="1.800"><path d="M3 2l6 6 6-6" /></svg>
              </ZoomBox>
              <HeaderBtn $w={33} $ml={17}>
                <svg width="18" height="20" viewBox="0 0 18 20" fill="none" stroke="#dfdbd2" strokeWidth="1.800"><path d="M3 2h7l4 4v11H3z" /><circle cx="9" cy="11" r="2.500" /><path d="M10.500 13l3 4" /></svg>
              </HeaderBtn>
              <HeaderBtn $w={33} $ml={9}>
                <svg width="16" height="16" viewBox="0 0 16 16" stroke="#dfdbd2" strokeWidth="2"><path d="M2 3h12M2 8h12M2 13h12" /></svg>
              </HeaderBtn>
            </HeaderBar>
            <ViewerBody>
              <Sidebar>
                <SidebarHead>
                  <SidebarTitle>Thumbnails</SidebarTitle>
                  <svg width="14" height="10" viewBox="0 0 14 10" fill="none" stroke="#444" strokeWidth="1.800"><path d="M2 2l5 5 5-5" /></svg>
                  <SidebarClose>×</SidebarClose>
                </SidebarHead>
                <ThumbPanel>
                  <ThumbCard>
                    <Graph g={RIGHT_GRAPH} viewBox="2178 74 1409 976" width={102} height={71} boost={3} />
                    <ThumbLabel>1</ThumbLabel>
                  </ThumbCard>
                </ThumbPanel>
              </Sidebar>
              <PageArea>
                <Page>
                  <Graph g={RIGHT_GRAPH} viewBox="2178 74 1409 976" width={1409} height={976} />
                </Page>
                <ScrollStrip />
              </PageArea>
            </ViewerBody>
          </Viewer>
        </Body>
      </Screen>
    </Desktop>
  </>
);

export default App;
